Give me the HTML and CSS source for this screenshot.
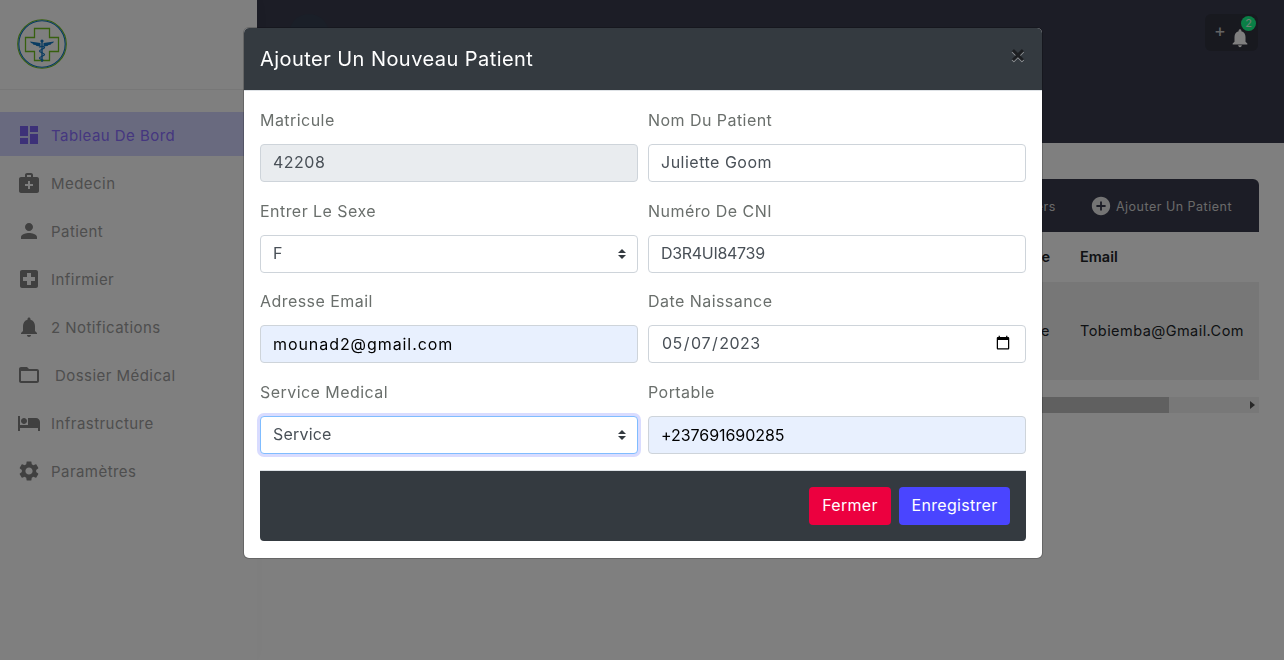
FILE: index.html
```html
<!DOCTYPE html>
<html lang="fr">
<head>
<meta charset="utf-8">
<title>Patients</title>
<link rel="stylesheet" href="styles.css">
</head>
<body>
<div class="app">
  <aside class="sidebar">
    <div class="brand">
      <svg class="logo" viewBox="0 0 50 50" width="50" height="50">
        <circle cx="25" cy="25" r="24.300" fill="none" stroke="#6fc01f" stroke-width="1.100"/>
        <circle cx="25" cy="25" r="23.200" fill="none" stroke="#0c76c0" stroke-width="1.100"/>
        <path d="M17.500 9.500h15v9h9v14h-9v9h-15v-9h-9v-14h9z" fill="none" stroke="#6fc01f" stroke-width="1.300"/>
        <path d="M13 22.500l10.500 1.500v3.500l-4-.5-1-1-2-.3-1-1.200-1.500-.5zM37 22.500l-10.500 1.500v3.500l4-.5 1-1 2-.3 1-1.200 1.500-.5z" fill="#1478c4"/>
        <circle cx="25" cy="22" r="1.600" fill="#1478c4"/>
        <path d="M25 22v21" stroke="#1478c4" stroke-width="1.400"/>
        <path d="M22.500 28.500c0-1.500 5-1.500 5 0s-5 2-5 3.500 5 2 5 3.500-5 2-5 3.500 4 1.500 4 2.500" fill="none" stroke="#1478c4" stroke-width="1.300"/>
      </svg>
    </div>
    <nav class="nav">
      <a class="nav-item active"><svg viewBox="0 0 24 24" class="nav-icon"><path d="M3 13h8V3H3v10zm0 8h8v-6H3v6zm10 0h8V11h-8v10zm0-18v6h8V3h-8z"/></svg><span>Tableau De Bord</span></a>
      <a class="nav-item"><svg viewBox="0 0 24 24" class="nav-icon"><path d="M20 6h-4V4c0-1.100-.9-2-2-2h-4c-1.100 0-2 .9-2 2v2H4c-1.100 0-2 .9-2 2v12c0 1.100.9 2 2 2h16c1.100 0 2-.9 2-2V8c0-1.100-.9-2-2-2zM10 4h4v2h-4V4zm6 11h-3v3h-2v-3H8v-2h3v-3h2v3h3v2z"/></svg><span>Medecin</span></a>
      <a class="nav-item"><svg viewBox="0 0 24 24" class="nav-icon"><path d="M12 12c2.210 0 4-1.790 4-4s-1.790-4-4-4-4 1.790-4 4 1.790 4 4 4zm0 2c-2.670 0-8 1.340-8 4v2h16v-2c0-2.660-5.330-4-8-4z"/></svg><span>Patient</span></a>
      <a class="nav-item"><svg viewBox="0 0 24 24" class="nav-icon"><path d="M19 3H5c-1.100 0-1.990.9-1.990 2L3 19c0 1.100.9 2 2 2h14c1.100 0 2-.9 2-2V5c0-1.100-.9-2-2-2zm-1 11h-4v4h-4v-4H6v-4h4V6h4v4h4v4z"/></svg><span>Infirmier</span></a>
      <a class="nav-item"><svg viewBox="0 0 24 24" class="nav-icon"><path d="M12 22c1.100 0 2-.9 2-2h-4c0 1.100.89 2 2 2zm6-6v-5c0-3.070-1.640-5.640-4.500-6.320V4c0-.83-.67-1.500-1.500-1.500s-1.500.67-1.500 1.500v.68C7.630 5.360 6 7.920 6 11v5l-2 2v1h16v-1l-2-2z"/></svg><span>2 Notifications</span></a>
      <a class="nav-item"><svg viewBox="0 0 24 24" class="nav-icon"><path d="M20 6h-8l-2-2H4c-1.100 0-1.990.9-1.990 2L2 18c0 1.100.9 2 2 2h16c1.100 0 2-.9 2-2V8c0-1.100-.9-2-2-2zm0 12H4V8h16v10z"/></svg><span class="indent">Dossier Médical</span></a>
      <a class="nav-item"><svg viewBox="0 0 24 24" class="nav-icon"><path d="M7 13c1.660 0 3-1.340 3-3S8.660 7 7 7s-3 1.340-3 3 1.340 3 3 3zm12-6h-8v7H3V5H1v15h2v-3h18v3h2v-9c0-2.210-1.790-4-4-4z"/></svg><span>Infrastructure</span></a>
      <a class="nav-item"><svg viewBox="0 0 24 24" class="nav-icon"><path d="M19.140 12.940c.04-.3.06-.61.06-.94 0-.32-.02-.64-.07-.94l2.030-1.580c.18-.14.23-.41.12-.61l-1.920-3.320c-.12-.22-.37-.29-.59-.22l-2.390.96c-.5-.38-1.030-.7-1.620-.94l-.36-2.540c-.04-.24-.24-.41-.48-.41h-3.840c-.24 0-.43.17-.47.41l-.36 2.540c-.59.24-1.130.57-1.620.94l-2.390-.96c-.22-.08-.47 0-.59.22L2.740 8.870c-.12.21-.08.47.12.61l2.030 1.580c-.05.3-.09.63-.09.94s.02.64.07.94l-2.030 1.580c-.18.14-.23.41-.12.61l1.920 3.320c.12.22.37.29.59.22l2.390-.96c.5.38 1.030.7 1.620.94l.36 2.540c.05.24.24.41.48.41h3.840c.24 0 .44-.17.47-.41l.36-2.540c.59-.24 1.130-.56 1.620-.94l2.390.96c.22.08.47 0 .59-.22l1.920-3.320c.12-.22.07-.47-.12-.61l-2.010-1.580zM12 15.600c-1.980 0-3.600-1.620-3.600-3.600s1.620-3.600 3.600-3.600 3.600 1.620 3.600 3.600-1.620 3.600-3.600 3.600z"/></svg><span>Paramètres</span></a>
    </nav>
  </aside>

  <main class="main">
    <header class="topbar">
      <div class="avatar"></div>
      <div class="notif">
        <span class="notif-plus">+</span>
        <svg viewBox="0 0 24 24" class="notif-bell"><path d="M12 22c1.100 0 2-.9 2-2h-4c0 1.100.89 2 2 2zm6-6v-5c0-3.070-1.640-5.640-4.500-6.320V4c0-.83-.67-1.500-1.500-1.500s-1.500.67-1.500 1.500v.68C7.630 5.360 6 7.920 6 11v5l-2 2v1h16v-1l-2-2z"/></svg>
        <span class="notif-badge">2</span>
      </div>
    </header>
    <section class="content">
      <div class="card">
        <div class="card-head">
          <span class="card-action">Filters</span>
          <span class="card-action add"><svg viewBox="0 0 24 24" class="add-icon"><path d="M12 2C6.480 2 2 6.480 2 12s4.480 10 10 10 10-4.480 10-10S17.520 2 12 2zm5 11h-4v4h-2v-4H7v-2h4V7h2v4h4v2z"/></svg>Ajouter Un Patient</span>
        </div>
        <div class="table-row table-header">
          <span class="cell-gender">Sexe</span>
          <span class="cell-email">Email</span>
        </div>
        <div class="table-row table-data">
          <span class="cell-gender">Femme</span>
          <span class="cell-email">Tobiemba@Gmail.Com</span>
        </div>
        <div class="scrollbar">
          <div class="scroll-thumb"></div>
          <span class="scroll-arrow"></span>
        </div>
      </div>
    </section>
  </main>
</div>

<div class="backdrop"></div>
<div class="modal-layer">
  <div class="modal">
    <div class="modal-header">
      <h5 class="modal-title">Ajouter Un Nouveau Patient</h5>
      <span class="modal-close">×</span>
    </div>
    <form class="modal-body">
      <div class="form-grid">
        <div class="field">
          <label class="field-label">Matricule</label>
          <input class="control" type="text" value="42208" readonly disabled>
        </div>
        <div class="field">
          <label class="field-label">Nom Du Patient</label>
          <input class="control" type="text" value="Juliette Goom">
        </div>
        <div class="field">
          <label class="field-label">Entrer Le Sexe</label>
          <div class="select-wrap">
            <select class="control select"><option>F</option></select>
            <svg class="select-arrows" viewBox="0 0 8 10" width="8" height="10"><path d="M4 0L8 4H0zM4 10L0 6h8z"/></svg>
          </div>
        </div>
        <div class="field">
          <label class="field-label">Numéro De CNI</label>
          <input class="control code" type="text" value="D3R4UI84739">
        </div>
        <div class="field">
          <label class="field-label">Adresse Email</label>
          <input class="control filled email" type="text" value="mounad2@gmail.com">
        </div>
        <div class="field">
          <label class="field-label">Date Naissance</label>
          <input class="control" type="date" value="2023-05-07">
        </div>
        <div class="field">
          <label class="field-label">Service Medical</label>
          <div class="select-wrap">
            <select class="control select focus"><option>Service</option></select>
            <svg class="select-arrows" viewBox="0 0 8 10" width="8" height="10"><path d="M4 0L8 4H0zM4 10L0 6h8z"/></svg>
          </div>
        </div>
        <div class="field">
          <label class="field-label">Portable</label>
          <input class="control filled phone" type="text" value="+237691690285">
        </div>
      </div>
      <div class="modal-footer">
        <button type="button" class="btn btn-close">Fermer</button>
        <button type="button" class="btn btn-save">Enregistrer</button>
      </div>
    </form>
  </div>
</div>
</body>
</html>
```
FILE: styles.css
```css
* { box-sizing: border-box; }
html, body { margin: 0; height: 100%; overflow: hidden; }
body {
  font-family: "Inter", "Liberation Sans", sans-serif;
  font-size: 16px;
  color: #212529;
  background: #fff;
}
.app { display: flex; height: 660px; }

.sidebar {
  width: 257px;
  flex: none;
  background: #fff;
  box-shadow: 0 0 14px rgba(0, 0, 0, .03);
  position: relative;
  z-index: 1;
}
.brand {
  height: 90px;
  padding: 19px 0 0 17px;
  border-bottom: 1px solid #eee;
}
.logo { display: block; }
.nav { padding-top: 22px; display: flex; flex-direction: column; gap: 4px; }
.nav-item {
  height: 44px;
  display: flex;
  align-items: center;
  gap: 10px;
  padding: 2px 0 0 17px;
  color: #9c9c9c;
  font-size: 15px;
  letter-spacing: .45px;
}
.nav-item.active { background: #d3d5ff; color: #8a6eff; }
.nav-item.active .nav-icon { fill: #7a62f0; }
.nav-icon { width: 24px; height: 24px; flex: none; fill: #808080; }
.indent { padding-left: 4px; }

.main { flex: 1; min-width: 0; display: flex; flex-direction: column; }
.topbar {
  height: 143px;
  background: #383a4c;
  display: flex;
  justify-content: space-between;
  align-items: flex-start;
  padding: 14px 26px 0 32px;
}
.avatar { width: 40px; height: 40px; border-radius: 50%; background: #343e50; }
.notif {
  width: 53px;
  height: 37px;
  border-radius: 6px;
  background: #30323f;
  position: relative;
}
.notif-plus {
  position: absolute;
  left: 9px;
  top: 6px;
  color: #c8c8c8;
  font-size: 18px;
  line-height: 22px;
}
.notif-bell {
  position: absolute;
  left: 24px;
  top: 13px;
  width: 22px;
  height: 22px;
  fill: #fff;
}
.notif-badge {
  position: absolute;
  left: 36px;
  top: 2px;
  width: 15px;
  height: 15px;
  border-radius: 50%;
  background: #14ff8c;
  color: #e0ffe8;
  font-size: 11px;
  line-height: 15px;
  text-align: center;
}

.content { padding: 36px 25px 0; flex: 1; }
.card { display: flex; flex-direction: column; }
.card-head {
  height: 53px;
  padding-top: 1px;
  background: #383a4c;
  border-radius: 6px 6px 0 0;
  display: flex;
  align-items: center;
  justify-content: flex-end;
  gap: 34px;
  padding-right: 27px;
  color: #d4d4d4;
  font-size: 12.500px;
  letter-spacing: .5px;
}
.card-action { display: flex; align-items: center; gap: 4px; }
.add-icon { width: 22px; height: 22px; fill: #e8e8e8; }
.table-row { display: flex; justify-content: flex-end; align-items: center; padding-right: 14px; }
.table-header { height: 50px; padding-bottom: 2px; font-weight: 600; font-size: 14.500px; }
.table-data { height: 98px; padding-bottom: 2px; background: #efefef; font-size: 14.500px; letter-spacing: .45px; }
.cell-gender { margin-right: 30px; }
.cell-email { width: 165px; }
.scrollbar {
  margin-top: 17px;
  height: 16px;
  background: #f1f1f1;
  position: relative;
}
.scroll-thumb { width: 887px; height: 100%; background: #c1c1c1; }
.scroll-arrow {
  position: absolute;
  right: 4px;
  top: 4px;
  border-left: 5px solid #505050;
  border-top: 4px solid transparent;
  border-bottom: 4px solid transparent;
}

.backdrop { position: fixed; inset: 0; background: rgba(0, 0, 0, .5); z-index: 5; }
.modal-layer { position: fixed; inset: 0; z-index: 6; }
.modal {
  margin: 28px 0 0 244px;
  width: 798px;
  height: 530px;
  background: #fff;
  border-radius: 5px;
  box-shadow: 0 0 0 1px rgba(0, 0, 0, .2);
  overflow: hidden;
}
.modal-header {
  height: 63px;
  background: #343a40;
  display: flex;
  align-items: center;
  justify-content: space-between;
  padding: 0 16px;
  border-bottom: 1px solid #dee2e6;
}
.modal-title {
  margin: 0;
  color: #fff;
  font-size: 20px;
  font-weight: 400;
  letter-spacing: .45px;
}
.modal-close {
  color: #1d1f22;
  font-size: 24px;
  font-weight: 700;
  line-height: 1;
  margin: -10px 0 0 0;
  text-shadow: 0 1px 0 rgba(255, 255, 255, .5);
}
.modal-body { padding: 17px 16px 0; }
.form-grid {
  display: grid;
  grid-template-columns: 378px 378px;
  column-gap: 10px;
  row-gap: 16.500px;
}
.field { display: flex; flex-direction: column; }
.field-label {
  height: 24px;
  line-height: 24px;
  margin-bottom: 12px;
  color: #6a6f6c;
  font-size: 16px;
  letter-spacing: .45px;
}
.control {
  display: block;
  width: 100%;
  height: 38px;
  padding: 0 12px 2px;
  border: 1px solid #ced4da;
  border-radius: 4px;
  background: #fff;
  color: #495057;
  font: inherit;
  font-size: 16px;
  letter-spacing: .5px;
  outline: none;
}
.control:disabled { background: #e9ecef; color: #495057; opacity: 1; }
.filled { background: #e8f0fe; color: #000; padding-bottom: 0; }
.code { letter-spacing: -.3px; }
.email { letter-spacing: .93px; }
.phone { letter-spacing: -.05px; }
.select { appearance: none; -webkit-appearance: none; letter-spacing: .2px; }
.select.focus { border-color: #80bdff; box-shadow: 0 0 0 3px #d9dcff; }
.select-wrap { position: relative; }
.select-arrows {
  position: absolute;
  right: 12px;
  top: 14px;
  fill: #343a40;
  pointer-events: none;
}
.modal-footer {
  margin-top: 16.500px;
  height: 71px;
  background: #343a40;
  box-shadow: inset 0 1px 0 #dee2e6;
  border-radius: 0 0 4px 4px;
  display: flex;
  justify-content: flex-end;
  align-items: center;
  gap: 8px;
  padding: 1px 16px 0;
}
.btn {
  height: 38px;
  padding: 0 12px 2px;
  border: 0;
  border-radius: 4px;
  color: #fff;
  font: inherit;
  font-size: 16px;
  letter-spacing: .3px;
}
.btn-close { background: #ec003f; width: 82px; }
.btn-save { background: #4a45ff; width: 111px; }
```
